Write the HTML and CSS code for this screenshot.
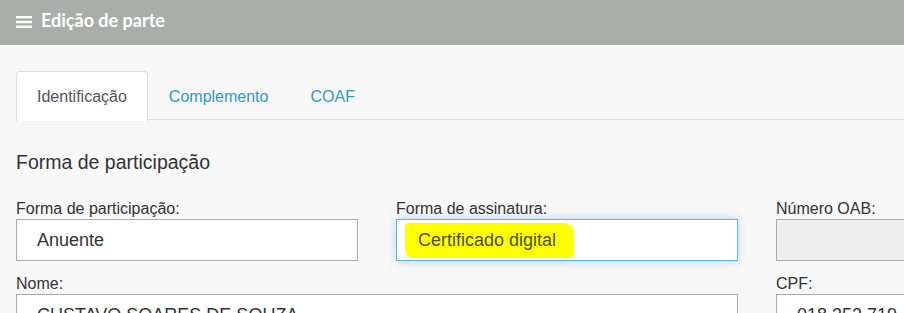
FILE: index.html
```html
<!DOCTYPE html>
<html lang="pt-BR">
<head>
    <meta charset="UTF-8">
    <title>Edição de parte</title>
    <link rel="stylesheet" href="styles.css">
</head>
<body>
    <!-- Cabeçalho -->
    <div class="topbar">
        <svg class="menu-icon" width="16" height="14" viewBox="0 0 16 14">
            <rect x="0" y="1" width="16" height="2.4" fill="#fff"/>
            <rect x="0" y="5.8" width="16" height="2.4" fill="#fff"/>
            <rect x="0" y="10.6" width="16" height="2.4" fill="#fff"/>
        </svg>
        <span class="topbar-title">Edição de parte</span>
    </div>

    <div class="content">
        <!-- Abas -->
        <ul class="tabs">
            <li class="tab active">Identificação</li>
            <li class="tab">Complemento</li>
            <li class="tab">COAF</li>
        </ul>

        <h3 class="section-title">Forma de participação</h3>

        <div class="form-grid">
            <div class="field">
                <label>Forma de participação:</label>
                <div class="input">Anuente</div>
            </div>
            <div class="field">
                <label>Forma de assinatura:</label>
                <div class="input focused"><span class="marker">Certificado digital</span></div>
            </div>
            <div class="field">
                <label>Número OAB:</label>
                <div class="input disabled"></div>
            </div>
            <div class="field wide">
                <label>Nome:</label>
                <div class="input">CUSTAVO SOARES DE SOUZA</div>
            </div>
            <div class="field">
                <label>CPF:</label>
                <div class="input">018.352.719-43</div>
            </div>
        </div>
    </div>
</body>
</html>
```

FILE: styles.css
```css
body {
    margin: 0;
    padding: 0;
    background-color: #f8f8f8;
    font-family: "Liberation Sans", Arial, sans-serif;
    color: #333;
    overflow: hidden;
}

.topbar {
    height: 45px;
    background-color: #aaaeab;
    display: flex;
    align-items: center;
    padding-left: 16px;
    gap: 9px;
}

.menu-icon {
    display: block;
    margin-top: -2px;
}

.topbar-title {
    font-family: Lato, "Open Sans", sans-serif;
    font-weight: bold;
    font-size: 18px;
    color: #fff;
    margin-top: -6px;
}

.content {
    padding: 26px 0 0 16px;
}

.tabs {
    list-style: none;
    margin: 0;
    padding: 0;
    display: flex;
    border-bottom: 1px solid #dddddd;
    height: 48px;
}

.tab {
    padding: 0 20px;
    height: 48px;
    line-height: 50px;
    font-size: 16px;
    color: #2e9bc1;
    border: 1px solid transparent;
    border-bottom: none;
    border-radius: 4px 4px 0 0;
}

.tab.active {
    background-color: #fff;
    color: #555;
    border-color: #dddddd;
    height: 49px;
    margin-bottom: -1px;
}

.section-title {
    margin: 31px 0 0 0;
    font-size: 19.5px;
    font-weight: normal;
    color: #333;
}

.form-grid {
    display: grid;
    grid-template-columns: 342px 342px 342px;
    column-gap: 38px;
    row-gap: 14px;
    margin-top: 26px;
}

.field label {
    display: block;
    font-size: 16px;
    color: #333;
    line-height: 17px;
    margin-bottom: 2px;
}

.field.wide {
    grid-column: span 2;
}

.input {
    box-sizing: border-box;
    height: 42px;
    background-color: #fff;
    border: 1px solid #a9a9a9;
    padding-left: 20px;
    font-size: 18px;
    line-height: 40px;
    color: #333;
}

.input.focused {
    border-color: #66afe9;
    box-shadow: 0 0 8px rgba(102, 175, 233, 0.5);
    padding-left: 8px;
}

.input.disabled {
    background-color: #eeeeee;
}

.marker {
    background-color: #ffff00;
    color: #4f4f00;
    padding: 7px 18px 8px 13px;
    border-radius: 4px 10px 3px 8px;
}
```
